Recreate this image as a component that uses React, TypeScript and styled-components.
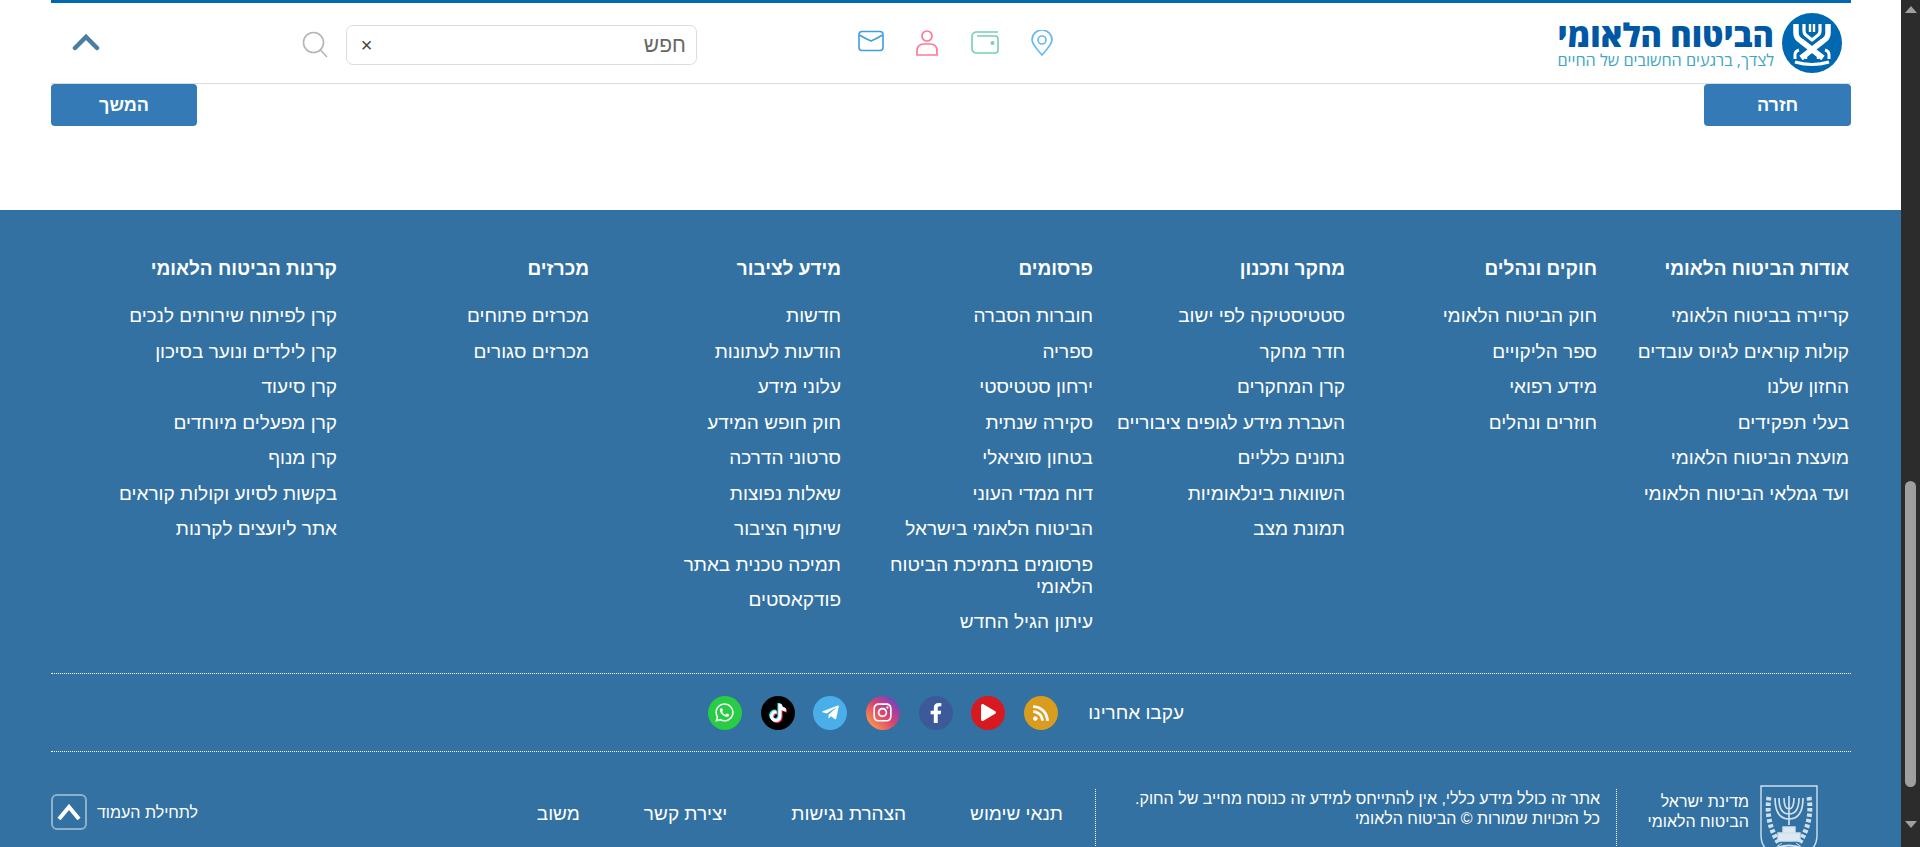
import React from 'react';
import styled, { createGlobalStyle } from 'styled-components';
import {
  FaFacebookF,
  FaInstagram,
  FaPlay,
  FaRss,
  FaTelegramPlane,
  FaTiktok,
  FaWhatsapp,
} from 'react-icons/fa';

const GlobalStyle = createGlobalStyle`
  html, body {
    margin: 0;
    padding: 0;
    height: 847px;
    overflow: hidden;
    background: #fff;
  }
  * {
    box-sizing: border-box;
  }
`;

const Viewport = styled.div`
  display: flex;
  width: 1920px;
  height: 847px;
  overflow: hidden;
  font-family: 'Liberation Sans', Arial, sans-serif;
`;

const Page = styled.div`
  width: 1901px;
  height: 847px;
  overflow: hidden;
`;

const ScrollTrack = styled.div`
  width: 19px;
  height: 847px;
  background: #2c2c2c;
  display: flex;
  flex-direction: column;
  align-items: center;
  padding-top: 6px;
`;

const ArrowUp = styled.div`
  width: 0;
  height: 0;
  border-left: 6px solid transparent;
  border-right: 6px solid transparent;
  border-bottom: 7px solid #a0a0a0;
`;

const ArrowDown = styled.div`
  width: 0;
  height: 0;
  margin-top: 34px;
  border-left: 6px solid transparent;
  border-right: 6px solid transparent;
  border-top: 7px solid #a0a0a0;
`;

const ScrollThumb = styled.div`
  width: 11px;
  height: 306px;
  margin-top: 468px;
  border-radius: 6px;
  background: #9f9f9f;
`;

const Header = styled.header`
  margin: 0 50px 0 51px;
  height: 84px;
  border-top: 3px solid #0067b1;
  border-bottom: 1px solid #dcdcdc;
  display: flex;
  align-items: center;
  direction: rtl;
  padding-right: 9px;
`;

const Logo = styled.div`
  display: flex;
  align-items: center;
  gap: 8px;
  width: 285px;
`;

const LogoSvg = styled.svg`
  width: 60px;
  height: 60px;
  flex-shrink: 0;
`;

const LogoText = styled.div`
  display: flex;
  flex-direction: column;
  white-space: nowrap;
`;

const LogoTitle = styled.span`
  font-family: 'Open Sans', 'Liberation Sans', sans-serif;
  font-size: 32.5px;
  line-height: 34px;
  font-weight: 800;
  color: #0057a4;
`;

const LogoSub = styled.span`
  font-family: 'Open Sans', 'Liberation Sans', sans-serif;
  font-size: 16.2px;
  line-height: 17px;
  color: #41a5c6;
`;

const HeaderIcons = styled.div`
  display: flex;
  gap: 31.8px;
  margin-right: 504px;
`;

const SearchBox = styled.div`
  width: 351px;
  height: 40px;
  margin: 4px 160.8px 0 0;
  padding: 0 10px 0 14px;
  border: 1px solid #dcdcdc;
  border-radius: 7px;
  display: flex;
  align-items: center;
  justify-content: space-between;
  font-size: 21px;
  color: #666;
`;

const ClearMark = styled.span`
  font-size: 20px;
  color: #444;
`;

const SearchIcon = styled.svg`
  width: 26px;
  height: 28px;
  margin: 4px 18px 0 0;
`;

const CollapseIcon = styled.svg`
  width: 28px;
  height: 18px;
  margin: 0 202px 2px 0;
`;

const ButtonsRow = styled.div`
  margin: 0 50px 0 51px;
  height: 126px;
  display: flex;
  justify-content: space-between;
  direction: rtl;
`;

const NavButton = styled.div<{ $width: number }>`
  width: ${(p) => p.$width}px;
  height: 42px;
  border-radius: 4px;
  background: #337ab7;
  color: #fff;
  font-size: 18px;
  font-weight: 700;
  display: flex;
  align-items: center;
  justify-content: center;
`;

const Footer = styled.footer`
  height: 637px;
  background: #3271a2;
  padding: 0 50px 0 51px;
  color: #fff;
  direction: rtl;
`;

const Columns = styled.div`
  height: 464px;
  padding: 47px 2px 0 0;
  border-bottom: 1px dotted #fff;
  display: grid;
  grid-template-columns: repeat(7, 252px);
  align-content: start;
`;

const Column = styled.div`
  padding-left: 20px;
`;

const ColumnTitle = styled.div`
  font-size: 19px;
  line-height: 24px;
  font-weight: 700;
  margin-bottom: 24px;
`;

const ColumnLink = styled.div`
  font-size: 19px;
  line-height: 22px;
  margin-bottom: 13.5px;
`;

const FollowRow = styled.div`
  height: 78px;
  padding-right: 667px;
  border-bottom: 1px dotted #fff;
  display: flex;
  align-items: center;
`;

const FollowLabel = styled.span`
  font-size: 19px;
  width: 95px;
  white-space: nowrap;
  margin-left: 31px;
`;

const SocialList = styled.div`
  display: flex;
  gap: 18.7px;
`;

const SocialCircle = styled.div<{ $bg: string; $size: number; $shadow?: boolean }>`
  width: 34px;
  height: 34px;
  border-radius: 50%;
  background: ${(p) => p.$bg};
  display: flex;
  align-items: center;
  justify-content: center;
  color: #fff;
  font-size: ${(p) => p.$size}px;
  ${(p) => p.$shadow && 'svg { filter: drop-shadow(-1px -1px 0 #25f4ee) drop-shadow(1px 1px 0 #fe2c55); }'}
`;

const BottomRow = styled.div`
  height: 94px;
  padding-top: 37px;
  display: flex;
  align-items: stretch;
`;

const StateBlock = styled.div`
  width: 235px;
  padding-right: 33px;
  border-left: 1px dotted #fff;
  display: flex;
  gap: 11px;
`;

const Emblem = styled.svg`
  width: 58px;
  height: 72px;
  margin-top: -4px;
  flex-shrink: 0;
`;

const StateName = styled.div`
  font-size: 16px;
  line-height: 20px;
  padding-top: 3px;
  white-space: nowrap;
`;

const Disclaimer = styled.div`
  width: 521px;
  padding-right: 16px;
  border-left: 1px dotted #fff;
  font-size: 16px;
  line-height: 20px;
  white-space: nowrap;
`;

const BottomLinks = styled.div`
  padding: 14px 32px 0 0;
  display: flex;
  gap: 64px;
  font-size: 19px;
  line-height: 22px;
  white-space: nowrap;
`;

const BackToTop = styled.div`
  margin-right: auto;
  height: 36px;
  margin-top: 5px;
  display: flex;
  align-items: center;
  gap: 10px;
  font-size: 16px;
  white-space: nowrap;
`;

const BackToTopLabel = styled.span`
  margin-top: 1px;
`;

const BackToTopIcon = styled.div`
  width: 36px;
  height: 36px;
  border: 2px solid rgba(255, 255, 255, 0.45);
  border-radius: 6px;
  display: flex;
  align-items: center;
  justify-content: center;
`;

const columns = [
  {
    title: 'אודות הביטוח הלאומי',
    links: ['קריירה בביטוח הלאומי', 'קולות קוראים לגיוס עובדים', 'החזון שלנו', 'בעלי תפקידים', 'מועצת הביטוח הלאומי', 'ועד גמלאי הביטוח הלאומי'],
  },
  {
    title: 'חוקים ונהלים',
    links: ['חוק הביטוח הלאומי', 'ספר הליקויים', 'מידע רפואי', 'חוזרים ונהלים'],
  },
  {
    title: 'מחקר ותכנון',
    links: ['סטטיסטיקה לפי ישוב', 'חדר מחקר', 'קרן המחקרים', 'העברת מידע לגופים ציבוריים', 'נתונים כלליים', 'השוואות בינלאומיות', 'תמונת מצב'],
  },
  {
    title: 'פרסומים',
    links: ['חוברות הסברה', 'ספריה', 'ירחון סטטיסטי', 'סקירה שנתית', 'בטחון סוציאלי', 'דוח ממדי העוני', 'הביטוח הלאומי בישראל', 'פרסומים בתמיכת הביטוח הלאומי', 'עיתון הגיל החדש'],
  },
  {
    title: 'מידע לציבור',
    links: ['חדשות', 'הודעות לעתונות', 'עלוני מידע', 'חוק חופש המידע', 'סרטוני הדרכה', 'שאלות נפוצות', 'שיתוף הציבור', 'תמיכה טכנית באתר', 'פודקאסטים'],
  },
  {
    title: 'מכרזים',
    links: ['מכרזים פתוחים', 'מכרזים סגורים'],
  },
  {
    title: 'קרנות הביטוח הלאומי',
    links: ['קרן לפיתוח שירותים לנכים', 'קרן לילדים ונוער בסיכון', 'קרן סיעוד', 'קרן מפעלים מיוחדים', 'קרן מנוף', 'בקשות לסיוע וקולות קוראים', 'אתר ליועצים לקרנות'],
  },
];

const LogoMark = () => (
  <LogoSvg viewBox="0 0 60 60">
    <circle cx="30" cy="30" r="30" fill="#0067b1" />
    <g fill="none" stroke="#fff" strokeLinejoin="round">
      <path d="M14 11 V20 Q14 25 19 28 L41 45" strokeWidth="5.5" />
      <path d="M46 11 V20 Q46 25 41 28 L19 45" strokeWidth="5.5" />
      <path d="M22 11 V18 Q22 21 25 23 L30 27 L35 23 Q38 21 38 18 V11" strokeWidth="3.2" />
      <path d="M28 11 V19 M32 11 V19" strokeWidth="2.4" />
      <path d="M13 46 V42 Q13 38 17 37 M47 46 V42 Q47 38 43 37" strokeWidth="3" />
      <path d="M24 46 V43 L30 38 L36 43 V46" strokeWidth="2.4" />
      <path d="M13 49 Q30 54 47 49" strokeWidth="3.2" />
    </g>
  </LogoSvg>
);

const MailIcon = () => (
  <svg width="26" height="22" viewBox="0 0 26 22" fill="none" stroke="#3f9fdc" strokeWidth="1.6">
    <rect x="1" y="1.5" width="24" height="19" rx="3" />
    <path d="M1.5 5 Q8 9 13 11 Q18 9 24.5 5" />
  </svg>
);

const PersonIcon = () => (
  <svg width="24" height="26" viewBox="0 0 24 26" fill="none" stroke="#ff7893" strokeWidth="1.7">
    <circle cx="12" cy="6" r="5" />
    <path d="M2 25 V21 Q2 14 9 14 H15 Q22 14 22 21 V25 Z" />
  </svg>
);

const WalletIcon = () => (
  <svg width="28" height="24" viewBox="0 0 28 24" fill="none" stroke="#76d0ae" strokeWidth="1.6">
    <path d="M27 2 H6 Q1 2 1 7 V18 Q1 23 6 23 H24 Q27 23 27 20 V9 Q27 6 24 6 H6" />
    <circle cx="21.5" cy="13" r="1.2" fill="#76d0ae" />
  </svg>
);

const PinIcon = () => (
  <svg width="22" height="26" viewBox="0 0 22 26" fill="none" stroke="#66b6f2" strokeWidth="1.6">
    <path d="M11 25 Q1 14 1 10 A10 10 0 0 1 21 10 Q21 14 11 25 Z" />
    <circle cx="11" cy="10" r="4" />
  </svg>
);

const StateEmblem = () => (
  <Emblem viewBox="0 0 58 72" fill="none" stroke="#cfe0ee" strokeWidth="1.4">
    <path d="M1 1 H57 V50 Q57 71 29 71 Q1 71 1 50 Z" />
    <path d="M9 12 Q5 38 20 60 M49 12 Q53 38 38 60" strokeWidth="5" strokeDasharray="3.5 2" />
    <path d="M29 11 V40 M19 13 Q19 29 29 29 Q39 29 39 13 M24 13 Q24 24 29 24 Q34 24 34 13 M15 13 Q15 34 29 34 Q43 34 43 13" strokeWidth="1.7" />
    <path d="M18 48 H40 V56 H18 Z M23 42 H35 V48 H23 Z" fill="#dce9f3" />
    <path d="M16 63 Q29 58 42 63" strokeWidth="2" />
  </Emblem>
);

const App = () => {
  return (
    <Viewport>
      <GlobalStyle />
      <Page>
        <Header>
          <Logo>
            <LogoMark />
            <LogoText>
              <LogoTitle>הביטוח הלאומי</LogoTitle>
              <LogoSub>לצדך, ברגעים החשובים של החיים</LogoSub>
            </LogoText>
          </Logo>
          <HeaderIcons>
            <PinIcon />
            <WalletIcon />
            <PersonIcon />
            <MailIcon />
          </HeaderIcons>
          <SearchBox>
            <span>חפש</span>
            <ClearMark>×</ClearMark>
          </SearchBox>
          <SearchIcon viewBox="0 0 26 28" fill="none" stroke="#b5b5b5" strokeWidth="1.6">
            <circle cx="11.5" cy="11.5" r="10" />
            <path d="M18.5 19 L25 26" />
          </SearchIcon>
          <CollapseIcon viewBox="0 0 28 18" fill="none" stroke="#4a7f9f" strokeWidth="4.5" strokeLinecap="round">
            <path d="M3 15 L14 4 L25 15" />
          </CollapseIcon>
        </Header>
        <ButtonsRow>
          <NavButton $width={147}>חזרה</NavButton>
          <NavButton $width={146}>המשך</NavButton>
        </ButtonsRow>
        <Footer>
          <Columns>
            {columns.map((col) => (
              <Column key={col.title}>
                <ColumnTitle>{col.title}</ColumnTitle>
                {col.links.map((link) => (
                  <ColumnLink key={link}>{link}</ColumnLink>
                ))}
              </Column>
            ))}
          </Columns>
          <FollowRow>
            <FollowLabel>עקבו אחרינו</FollowLabel>
            <SocialList>
              <SocialCircle $bg="#d99c1e" $size={18}><FaRss /></SocialCircle>
              <SocialCircle $bg="#d81920" $size={17}><FaPlay /></SocialCircle>
              <SocialCircle $bg="#3c5a99" $size={20}><FaFacebookF /></SocialCircle>
              <SocialCircle $bg="linear-gradient(45deg, #ff9a4a 10%, #d9436f 50%, #6f42c8 90%)" $size={21}><FaInstagram /></SocialCircle>
              <SocialCircle $bg="#4aaee8" $size={19}><FaTelegramPlane /></SocialCircle>
              <SocialCircle $bg="#000" $size={18} $shadow><FaTiktok /></SocialCircle>
              <SocialCircle $bg="#28cc45" $size={21}><FaWhatsapp /></SocialCircle>
            </SocialList>
          </FollowRow>
          <BottomRow>
            <StateBlock>
              <StateEmblem />
              <StateName>
                מדינת ישראל
                <br />
                הביטוח הלאומי
              </StateName>
            </StateBlock>
            <Disclaimer>
              אתר זה כולל מידע כללי, אין להתייחס למידע זה כנוסח מחייב של החוק.
              <br />
              כל הזכויות שמורות © הביטוח הלאומי
            </Disclaimer>
            <BottomLinks>
              <span>תנאי שימוש</span>
              <span>הצהרת נגישות</span>
              <span>יצירת קשר</span>
              <span>משוב</span>
            </BottomLinks>
            <BackToTop>
              <BackToTopLabel>לתחילת העמוד</BackToTopLabel>
              <BackToTopIcon>
                <svg width="24" height="16" viewBox="0 0 24 16" fill="none" stroke="#fff" strokeWidth="4">
                  <path d="M2 15 L12 3 L22 15" />
                </svg>
              </BackToTopIcon>
            </BackToTop>
          </BottomRow>
        </Footer>
      </Page>
      <ScrollTrack>
        <ArrowUp />
        <ScrollThumb />
        <ArrowDown />
      </ScrollTrack>
    </Viewport>
  );
};

export default App;
